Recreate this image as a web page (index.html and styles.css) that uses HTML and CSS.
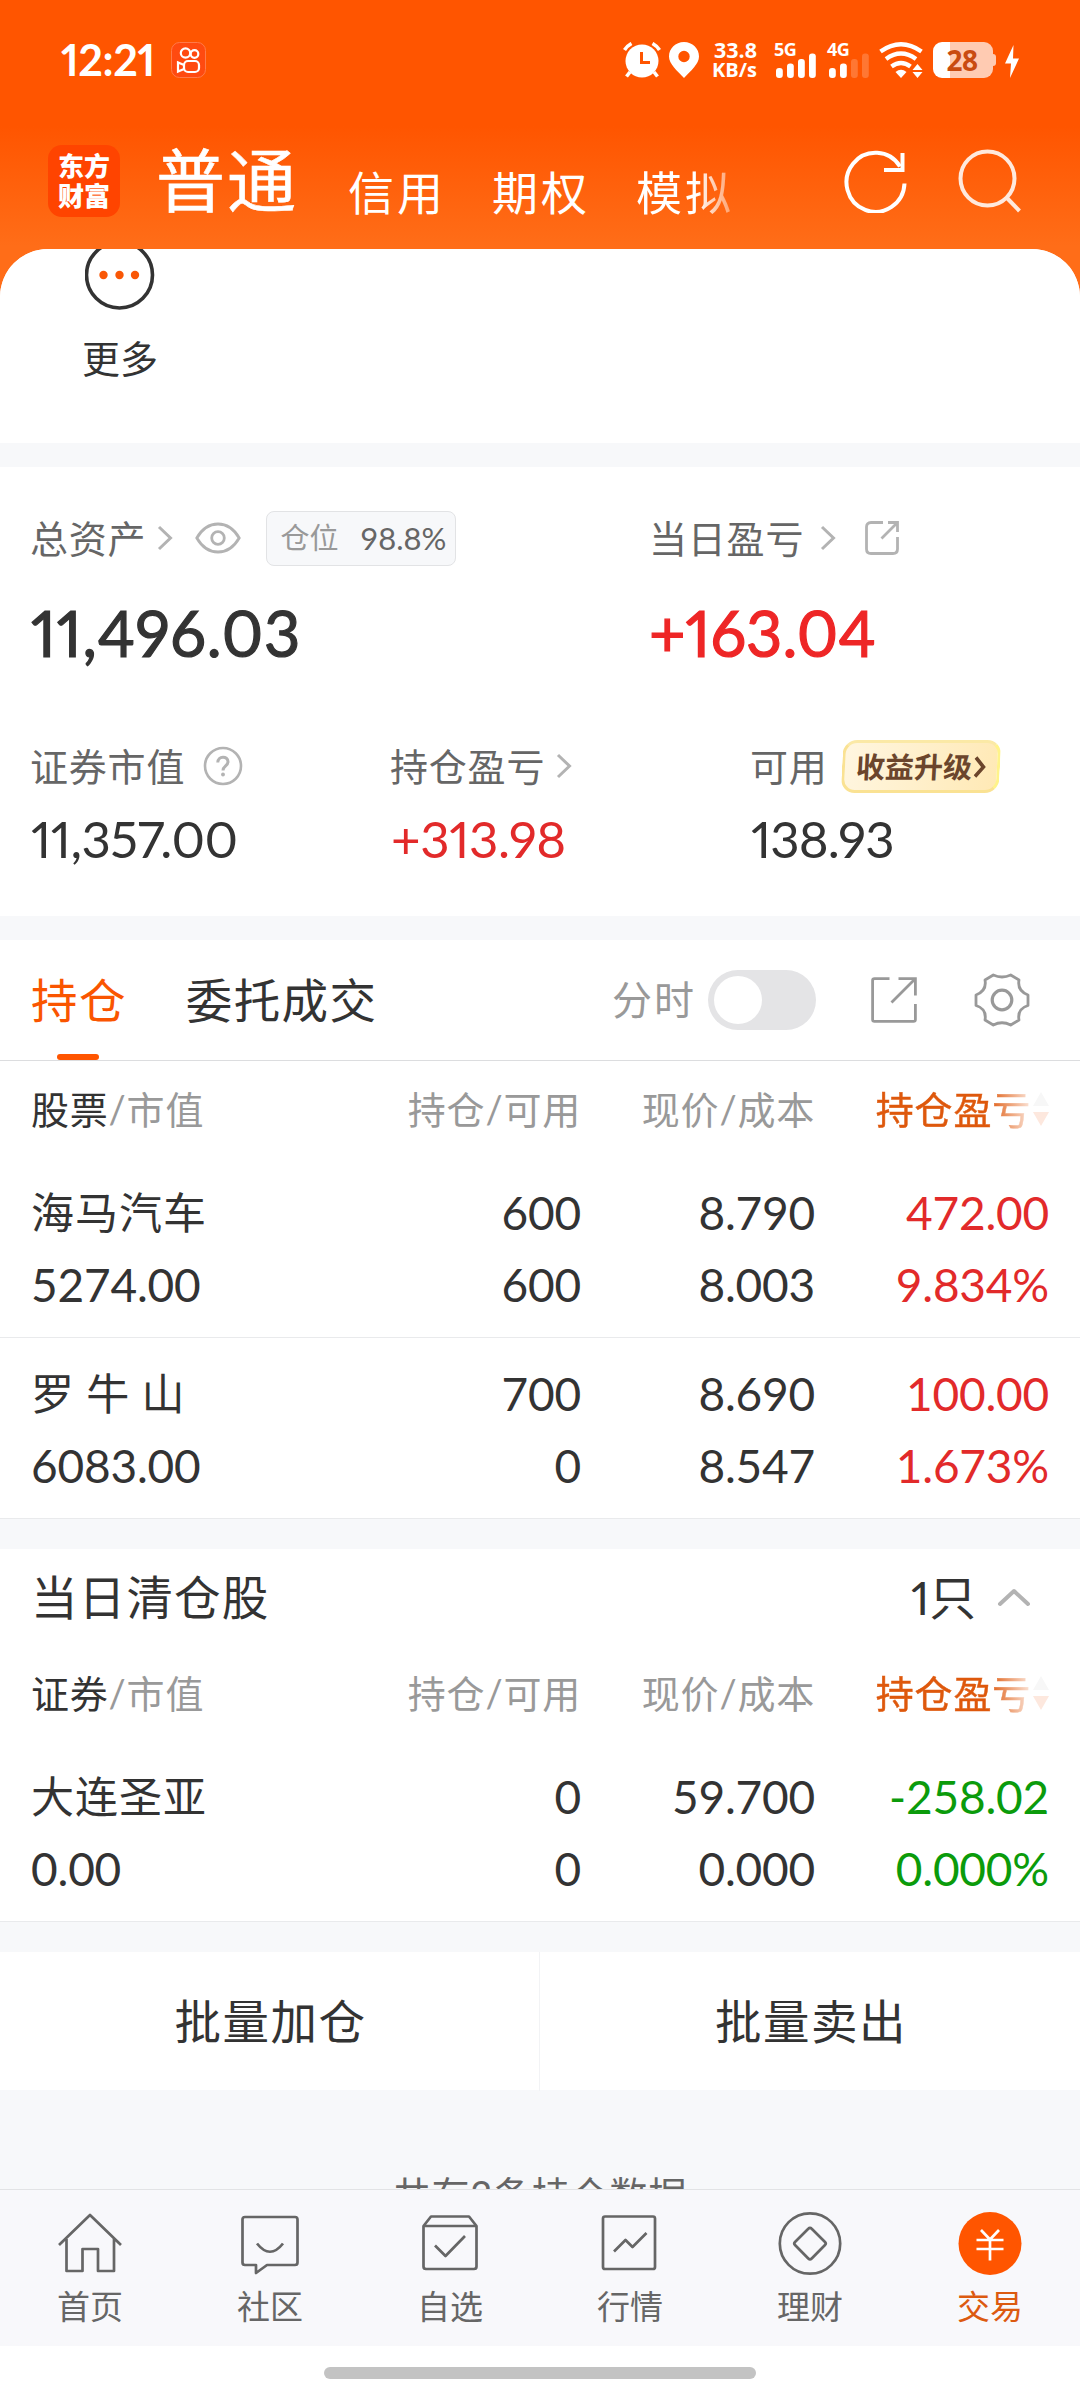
FILE: index.html
```html
<!DOCTYPE html>
<html lang="zh-CN">
<head>
<meta charset="utf-8">
<title>交易</title>
<link rel="stylesheet" href="styles.css">
</head>
<body>
<div class="screen">
  <header class="top">
    <div class="status">
      <span class="clock">12:21</span>
      <svg class="app-dot" width="36" height="36" viewBox="0 0 36 36" fill="none">
        <rect x=".5" y=".5" width="34" height="35" rx="8" fill="#ff4a10" stroke="#ff7a4a"/>
        <g stroke="#fff" stroke-width="2.2"><circle cx="14.500" cy="11" r="4.700"/><circle cx="23.500" cy="12" r="3.800"/><rect x="13" y="19" width="15" height="11" rx="4"/><path d="M13 23 L7 20.500 V29.500 L13 27"/></g>
      </svg>
      <div class="status-right">
        <svg class="st-alarm" width="38" height="36" viewBox="0 0 38 36" fill="none">
          <circle cx="19" cy="19" r="16.500" fill="#fff"/>
          <path d="M1.500 8 Q4 4 8.500 1.500 M36.500 8 Q34 4 29.500 1.500 M7 30 L3.500 34.500 M31 30 L34.500 34.500" stroke="#fff" stroke-width="3.600"/>
          <path d="M18.500 10 V20.500 H27" stroke="#ff5500" stroke-width="3"/>
        </svg>
        <svg class="st-pin" width="30" height="36" viewBox="0 0 30 36"><path fill="#fff" fill-rule="evenodd" d="M15 0 C6.500 0 0 6.500 0 14.500 C0 22 8 28.500 15 36 C22 28.500 30 22 30 14.500 C30 6.500 23.500 0 15 0 Z M15 8.800 A5.700 5.700 0 1 1 15 20.200 A5.700 5.700 0 1 1 15 8.800 Z"/></svg>
        <div class="speed"><span class="speed-num">33.8</span><span class="speed-unit">KB/s</span></div>
        <div class="sig sig-a"><span class="gen">5G</span>
          <svg width="42" height="36" viewBox="0 0 42 36" fill="#fff"><rect x="2" y="26" width="6.800" height="10" rx="3"/><rect x="13" y="21.500" width="6.800" height="14.500" rx="3"/><rect x="24" y="17" width="6.800" height="19" rx="3"/><rect x="35" y="11.500" width="6.800" height="24.500" rx="3"/></svg>
        </div>
        <div class="sig sig-b"><span class="gen">4G</span>
          <svg width="42" height="36" viewBox="0 0 42 36" fill="#fff"><rect x="2" y="26" width="6.800" height="10" rx="3"/><rect x="13" y="21.500" width="6.800" height="14.500" rx="3"/><rect x="24" y="17" width="6.800" height="19" rx="3" opacity=".2"/><rect x="35" y="11.500" width="6.800" height="24.500" rx="3" opacity=".2"/></svg>
        </div>
        <svg class="st-wifi" width="44" height="36" viewBox="0 0 44 36" fill="none">
          <g stroke="#fff" stroke-width="4.400"><path d="M1.500 9.500 Q22 -5 42.500 9.500"/><path d="M7 17 Q22 6 37 17"/><path d="M12.500 24.500 Q22 17.500 31.500 24.500"/></g>
          <path d="M16.500 30 Q22 25.500 27.500 30 L22 36 Z" fill="#fff"/>
          <path d="M38.500 22 L43.500 28 H33.500 Z M38.500 36 L43.500 30 H33.500 Z" fill="#fff"/>
        </svg>
        <div class="battery"><span class="battery-num">28</span></div>
        <svg class="st-bolt" width="14" height="33" viewBox="0 0 14 33"><path d="M8.500 0 L0 18.500 H6 L5 33 L14 13.500 H8 Z" fill="#fff"/></svg>
      </div>
    </div>
    <nav class="modes">
      <div class="logo"><span>东方</span><span>财富</span></div>
      <span class="mode mode-on">普通</span>
      <span class="mode mode-b">信用</span>
      <span class="mode mode-c">期权</span>
      <span class="mode mode-d">模拟</span>
      <svg class="ic-refresh" width="64" height="64" viewBox="0 0 64 64" fill="none" stroke="#fff" stroke-width="4"><path d="M60.500 34.500 A29 29.500 0 1 1 56 17.500"/><path d="M58.500 4 V21 H40"/></svg>
      <svg class="ic-search" width="64" height="64" viewBox="0 0 64 64" fill="none" stroke="#ffe9dd" stroke-width="4"><circle cx="29.500" cy="29.500" r="27"/><path d="M48.500 48.500 L61.500 62"/></svg>
    </nav>
  </header>

  <main class="content">
    <section class="more">
      <svg width="70" height="62" viewBox="0 0 70 62" fill="none"><circle cx="34.500" cy="26" r="33" stroke="#333" stroke-width="3.600"/><g fill="#f95706"><circle cx="18.500" cy="26" r="4.200"/><circle cx="34.500" cy="26" r="4.200"/><circle cx="50" cy="26" r="4.200"/></g></svg>
      <span>更多</span>
    </section>

    <section class="assets">
      <div class="asset-top">
        <div class="asset-a">
          <div class="label-row"><span class="label">总资产</span>
            <svg class="chev chev-a" width="16" height="26" viewBox="0 0 16 26"><path d="M2 2 L13.500 13 L2 24"/></svg>
            <svg class="eye" width="46" height="34" viewBox="0 0 46 34" fill="none" stroke="#b3b3b3" stroke-width="2.800"><path d="M1.800 17 C7 8 14 3 23 3 C32 3 39 8 44.200 17 C39 26 32 31 23 31 C14 31 7 26 1.800 17 Z"/><circle cx="23" cy="17" r="6.300"/></svg>
            <div class="ratio"><span class="ratio-k">仓位</span><span class="ratio-v">98.8%</span></div>
          </div>
          <div class="big big-a">11,496.03</div>
        </div>
        <div class="asset-b">
          <div class="label-row"><span class="label">当日盈亏</span>
            <svg class="chev chev-b" width="16" height="26" viewBox="0 0 16 26"><path d="M2 2 L13.500 13 L2 24"/></svg>
            <svg class="share-s" width="34" height="34" viewBox="0 0 34 34" fill="none" stroke="#b3b3b3" stroke-width="2.800"><path d="M18 1.500 H6 Q1.500 1.500 1.500 6 V28 Q1.500 32.500 6 32.500 H28 Q32.500 32.500 32.500 28 V16"/><path d="M23 1.500 H32.500 V11 M32 2 L16.500 17.500"/></svg>
          </div>
          <div class="big up">+163.04</div>
        </div>
      </div>
      <div class="asset-bottom">
        <div>
          <div class="label-row"><span class="label">证券市值</span>
            <span class="help"><svg width="40" height="40" viewBox="0 0 40 40" fill="none" stroke="#b3b3b3" stroke-width="2.600"><circle cx="20" cy="20" r="18"/><path d="M14.800 16.500 C14.800 9.500 25 9.500 25 15.800 C25 19.800 20 20 20 24.500" stroke-width="3"/><circle cx="20" cy="28.500" r="1.200" stroke-width="1.500" fill="#b3b3b3"/></svg></span>
          </div>
          <div class="mid mid-a">11,357.00</div>
        </div>
        <div>
          <div class="label-row"><span class="label">持仓盈亏</span>
            <svg class="chev chev-c" width="16" height="26" viewBox="0 0 16 26"><path d="M2 2 L13.500 13 L2 24"/></svg>
          </div>
          <div class="mid up mid-b">+313.98</div>
        </div>
        <div>
          <div class="label-row"><span class="label">可用</span>
            <div class="promo"><span>收益升级</span><svg width="12" height="22" viewBox="0 0 12 22" fill="none" stroke="#6b452c" stroke-width="3.600"><path d="M1.500 1.500 L9.500 11 L1.500 20.500"/></svg></div>
          </div>
          <div class="mid mid-c">138.93</div>
        </div>
      </div>
    </section>

    <section class="positions">
      <div class="tabs">
        <span class="tab tab-on">持仓</span>
        <span class="tab tab-b">委托成交</span>
        <div class="tools">
          <span class="tick">分时</span>
          <span class="switch"><i></i></span>
          <svg class="share-l" width="46" height="46" viewBox="0 0 46 46" fill="none" stroke="#999" stroke-width="2.800"><path d="M18.500 1.600 H3.500 Q1.600 1.600 1.600 3.500 V42.500 Q1.600 44.400 3.500 44.400 H42.500 Q44.400 44.400 44.400 42.500 V27"/><path d="M27.500 1.600 H44.400 V18.500 M44 2 L20.500 25.500"/></svg>
          <svg class="gear" width="56" height="56" viewBox="0 0 56 56" fill="none" stroke="#999" stroke-width="2.800" stroke-linejoin="round"><path d="M19.300 3 Q28 7 36.700 3 L45 8 Q43 19 54 23 V33.500 Q43 37 45 48 L36.700 53 Q28 48.500 19.300 53 L11 48 Q13 37 2 33.500 V23 Q13 19 11 8 Z"/><circle cx="28" cy="28" r="9.800" stroke-width="3.200"/></svg>
        </div>
      </div>
      <div class="thead">
        <span><b>股票</b>/市值</span><span>持仓/可用</span><span>现价/成本</span>
        <span class="sort"><em>持仓盈亏</em><svg width="16" height="34" viewBox="0 0 16 34"><path d="M8 0 L16 14 H0 Z" fill="#f7f7f7"/><path d="M8 34 L16 20 H0 Z" fill="#fde8de"/></svg></span>
      </div>
      <div class="row">
        <div class="cell"><span class="name">海马汽车</span><span>5274.00</span></div>
        <div class="cell"><span>600</span><span>600</span></div>
        <div class="cell"><span>8.790</span><span>8.003</span></div>
        <div class="cell up"><span>472.00</span><span>9.834%</span></div>
      </div>
      <div class="row">
        <div class="cell"><span class="name name-wide">罗 牛 山</span><span>6083.00</span></div>
        <div class="cell"><span>700</span><span>0</span></div>
        <div class="cell"><span>8.690</span><span>8.547</span></div>
        <div class="cell up"><span>100.00</span><span>1.673%</span></div>
      </div>
    </section>

    <section class="cleared">
      <div class="cleared-head"><span class="cleared-title">当日清仓股</span><span class="count">1只</span>
        <svg width="34" height="20" viewBox="0 0 34 20" fill="none" stroke="#b3b3b3" stroke-width="4" stroke-linecap="round" stroke-linejoin="round"><path d="M3 17 L17 4 L31 17"/></svg>
      </div>
      <div class="thead">
        <span><b>证券</b>/市值</span><span>持仓/可用</span><span>现价/成本</span>
        <span class="sort"><em>持仓盈亏</em><svg width="16" height="34" viewBox="0 0 16 34"><path d="M8 0 L16 14 H0 Z" fill="#f7f7f7"/><path d="M8 34 L16 20 H0 Z" fill="#fde8de"/></svg></span>
      </div>
      <div class="row">
        <div class="cell"><span class="name">大连圣亚</span><span>0.00</span></div>
        <div class="cell"><span>0</span><span>0</span></div>
        <div class="cell"><span>59.700</span><span>0.000</span></div>
        <div class="cell down"><span>-258.02</span><span>0.000%</span></div>
      </div>
    </section>

    <section class="batch"><span>批量加仓</span><span>批量卖出</span></section>
    <p class="total">共有2条持仓数据</p>
  </main>

  <nav class="bottom">
    <a class="item"><svg width="66" height="66" viewBox="0 0 66 66"><path d="M2 34 L33 4 L64 34 M9.500 28 V60 H25.500 V38 H41 V60 H57 V28"/></svg><span>首页</span></a>
    <a class="item"><svg width="66" height="66" viewBox="0 0 66 66"><path d="M8 6 H58 Q60.500 6 60.500 8.500 V51.500 Q60.500 54 58 54 H30 L19 62 V54 H8 Q5.500 54 5.500 51.500 V8.500 Q5.500 6 8 6 Z M20 32.500 Q33 49 46 32.500"/></svg><span>社区</span></a>
    <a class="item"><svg width="66" height="66" viewBox="0 0 66 66"><path d="M6.500 15 L14 5.500 H52 L59.500 15 V55.500 Q59.500 58 57 58 H9 Q6.500 58 6.500 55.500 Z M6.500 15 H59.500 M18 34.500 L28.500 45 L48 25"/></svg><span>自选</span></a>
    <a class="item"><svg width="66" height="66" viewBox="0 0 66 66"><path d="M8 5.500 H56 Q58 5.500 58 7.500 V56 Q58 58 56 58 H8 Q6 58 6 56 V7.500 Q6 5.500 8 5.500 Z M17 40.500 L28.500 29 L35.500 36 L49.500 22"/></svg><span>行情</span></a>
    <a class="item"><svg width="66" height="66" viewBox="0 0 66 66"><circle cx="33" cy="32.500" r="30.200"/><path d="M31.300 17.800 Q33 16 34.700 17.800 L48 31 Q49.500 32.500 48 34 L34.700 47.500 Q33 49.200 31.300 47.500 L18 34 Q16.500 32.500 18 31 Z"/></svg><span>理财</span></a>
    <a class="item item-on"><svg width="66" height="66" viewBox="0 0 66 66"><circle cx="33" cy="32.500" r="31.500" fill="#ff5500" stroke="none"/><path d="M24 19 L33 28.500 L42 19 M33 28.500 V49.500 M19.500 29 H46.500 M19.500 38 H46.500" stroke="#fff"/></svg><span>交易</span></a>
  </nav>
  <div class="gesture"><i></i></div>
</div>
</body>
</html>
```
FILE: styles.css
```css
* { box-sizing: border-box; }
body {
  margin: 0;
  background: #fff;
  color: #333;
  font-family: "Lato", "Noto Sans CJK SC", sans-serif;
}
svg { display: block; flex: none; }
span { white-space: nowrap; }

.screen {
  width: 1080px;
  height: 2400px;
  display: flex;
  flex-direction: column;
  overflow: hidden;
  background: linear-gradient(#ff5500 0, #ff5500 126px, #ff6d18 246px, #ff6d18 320px);
}

/* header */
.top { height: 249px; flex: none; color: #fff; }
.status { height: 120px; padding: 42px 61px 0 61px; display: flex; align-items: flex-start; }
.clock { width: 110px; font-size: 43px; line-height: 36px; font-weight: 700; letter-spacing: -.4px; font-feature-settings: "pnum"; }
.status-right { margin-left: auto; display: flex; align-items: flex-start; height: 37px; }
.st-pin { margin-left: 8px; }
.speed { width: 45px; margin-left: 13px; display: flex; flex-direction: column; align-items: flex-end; font-weight: 700; }
.speed-num { font-family: "Open Sans", sans-serif; font-size: 21.500px; line-height: 16px; }
.speed-unit { font-family: "Open Sans", sans-serif; font-size: 20px; line-height: 20px; margin-top: 2px; }
.sig { position: relative; }
.sig-a { margin-left: 17px; }
.sig-b { margin-left: 11px; }
.gen { position: absolute; left: 0; top: -2px; font: 700 18px/18px "Open Sans", sans-serif; letter-spacing: -.5px; }
.st-wifi { margin-left: 10px; }
.battery {
  position: relative;
  width: 60px; height: 36px; margin-left: 10px; border-radius: 9px;
  background: linear-gradient(90deg, #fff 17px, #ffcbb2 17px);
  display: flex; align-items: center; justify-content: center;
}
.battery::after { content: ""; position: absolute; left: 60px; top: 12px; width: 3px; height: 12px; background: #ffcbb2; border-radius: 0 3px 3px 0; }
.battery-num { color: #c94b10; font: 700 28px/36px "Noto Sans", sans-serif; letter-spacing: -.5px; margin-left: -2px; }
.st-bolt { margin: 3px 0 0 12px; }

.modes { height: 129px; display: flex; align-items: flex-start; padding: 25px 58px 0 48px; }
.logo {
  width: 72px; height: 72px; border-radius: 14px; background: #ff4400;
  display: flex; flex-direction: column; align-items: center; justify-content: center;
  font-weight: 900; font-size: 26px; line-height: 30px;
}
.mode { font-size: 46px; line-height: 56px; letter-spacing: 3px; margin-top: 20px; width: 144px; }
.mode-on { font-size: 69px; line-height: 80px; margin: -4px 0 0 36px; width: 192px; letter-spacing: 2px; -webkit-text-stroke: .6px #fff; }
.mode-d { width: 98px; -webkit-mask: linear-gradient(90deg, #000 60px, rgba(0,0,0,.45) 92px); mask: linear-gradient(90deg, #000 60px, rgba(0,0,0,.45) 92px); }
.ic-refresh { margin: 4px 0 0 110px; }
.ic-search { margin: 4px 0 0 auto; }

/* scroll area */
.content { flex: 1; min-height: 0; overflow: hidden; border-radius: 48px 48px 0 0; background: #f7f8fa; }
.more { height: 194px; background: #fff; padding-left: 60px; width: 1080px; }
.more svg { margin-left: 25px; }
.more span { display: block; width: 120px; text-align: center; font-size: 38px; line-height: 48px; margin-top: 23px; }

.assets { margin-top: 24px; height: 449px; background: #fff; padding: 44px 32px 0 30px; }
.label-row { display: flex; align-items: center; height: 54px; }
.label { font-size: 38px; line-height: 54px; color: #666; letter-spacing: .8px; }
.chev { fill: none; stroke: #b3b3b3; stroke-width: 3; }
.chev-a { margin-left: 11px; }
.chev-b { margin-left: 16px; }
.chev-c { margin-left: 11px; }
.asset-top { display: grid; grid-template-columns: 619px 1fr; height: 228px; }
.eye { margin-left: 22px; }
.ratio { width: 190px; height: 55px; margin-left: 25px; border: 1px solid #e2e3e5; border-radius: 8px; background: #f7f8fa; display: flex; align-items: center; justify-content: space-between; padding: 0 9px 0 13px; }
.ratio-k { font-size: 29px; color: #999; line-height: 50px; }
.ratio-v { font-size: 31px; color: #666; line-height: 50px; }
.share-s { margin-left: 29px; }
.big { font-size: 63px; line-height: 76px; margin-top: 30px; font-feature-settings: "pnum"; -webkit-text-stroke: 1.200px currentColor; }
.big-a { letter-spacing: .8px; margin-left: 1px; }
.big.up { color: #ee2626; }
.asset-bottom { display: grid; grid-template-columns: 360px 360px 1fr; }
.help { margin-left: 18px; }
.mid { font-size: 51px; line-height: 60px; margin-top: 16px; font-feature-settings: "pnum"; }
.mid-a { letter-spacing: -.5px; margin-left: 1px; }
.mid-b { letter-spacing: -.4px; margin-left: 1px; }
.mid-c { letter-spacing: -.9px; margin-left: 1px; }
.promo {
  width: 158px; height: 53px; margin-left: 14px; padding-left: 11px;
  border: 3px solid #fae293; border-radius: 14px; border-top-color: #fbe9a6; border-right-color: #fff38a;
  background: linear-gradient(100deg, #fff6e0, #ffe9b5);
  display: flex; align-items: center; gap: 2px; transform: skewX(-3deg);
  color: #6b452c; font-size: 29px; line-height: 46px; font-weight: 700;
}
.up { color: #e22a2a; }
.down { color: #0b9b0b; }

/* positions */
.positions { margin-top: 24px; background: #fff; }
.tabs { height: 121px; border-bottom: 1px solid #dcdddf; display: flex; padding: 0 50px 0 31px; align-items: center; }
.tab { font-size: 46.500px; line-height: 120px; letter-spacing: 1.400px; }
.tab-on { position: relative; color: #fa5500; }
.tab-on::after { content: ""; position: absolute; left: 26px; bottom: 0; width: 42px; height: 6px; border-radius: 3px; background: #ff5500; }
.tab-b { margin-left: 59px; }
.tools { margin-left: auto; display: flex; align-items: center; }
.tick { font-size: 40px; line-height: 60px; color: #999; letter-spacing: 2px; }
.switch { width: 108px; height: 60px; border-radius: 30px; background: #e4e4e6; margin-left: 12px; padding: 6px; }
.switch i { display: block; width: 48px; height: 48px; border-radius: 50%; background: #fff; }
.share-l { margin-left: 55px; }
.gear { margin-left: 57px; }

.thead, .row { display: grid; grid-template-columns: 300px 250px 234px 234px; padding-left: 31px; }
.thead { height: 96px; font-size: 38px; line-height: 96px; color: #999; letter-spacing: .8px; }
.thead > span { text-align: right; }
.thead > span:first-child { text-align: left; }
.thead b { font-weight: 400; color: #333; }
.thead .sort { display: flex; align-items: center; justify-content: flex-end; gap: 2px; }
.sort em { font-style: normal; color: transparent; -webkit-text-stroke: .5px transparent; background: linear-gradient(90deg, #de580c 112px, #fbe3d6 154px); -webkit-background-clip: text; background-clip: text; }
.row { height: 181px; border-bottom: 1px solid #e9eaec; padding-top: 20px; font-size: 46px; line-height: 72px; }
.cell { display: flex; flex-direction: column; text-align: right; letter-spacing: -.2px; }
.cell span { height: 72px; }
.cell:first-child { text-align: left; }
.cell .name { font-size: 43px; letter-spacing: 1px; }
.cell .name-wide { word-spacing: 0; letter-spacing: .6px; }

.cleared { margin-top: 30px; background: #fff; }
.cleared-head { height: 96px; padding: 0 49px 0 31px; display: flex; align-items: center; font-size: 46.500px; line-height: 96px; }
.cleared-title { letter-spacing: 1.200px; }
.count { margin-left: auto; margin-right: 21px; font-feature-settings: "pnum"; }

.batch { margin-top: 30px; height: 138px; background: #fff; display: grid; grid-template-columns: 540px 540px; text-align: center; font-size: 46.500px; line-height: 139px; letter-spacing: 1.500px; }
.batch span { padding-left: 2px; }
.batch span:first-child { border-right: 1px solid #f2f3f5; }
.total { margin: 77px 0 0; text-align: center; font-size: 38px; line-height: 54px; color: #666; letter-spacing: .8px; }

/* bottom bar */
.bottom { height: 157px; flex: none; border-top: 1px solid #e2e3e5; background: #f8f8fb; display: grid; grid-template-columns: repeat(6, 180px); }
.item { display: flex; flex-direction: column; align-items: center; padding-top: 21px; font-size: 33px; line-height: 44px; color: #666; }
.item svg { fill: none; stroke: #666; stroke-width: 2.700; stroke-linejoin: round; }
.item span { margin-top: 7px; }
.item-on { color: #dc5a10; }
.gesture { height: 54px; flex: none; background: #fff; padding-top: 21px; }
.gesture i { display: block; width: 432px; height: 12px; border-radius: 6px; margin: 0 auto; background: #c3c3c3; }
```
